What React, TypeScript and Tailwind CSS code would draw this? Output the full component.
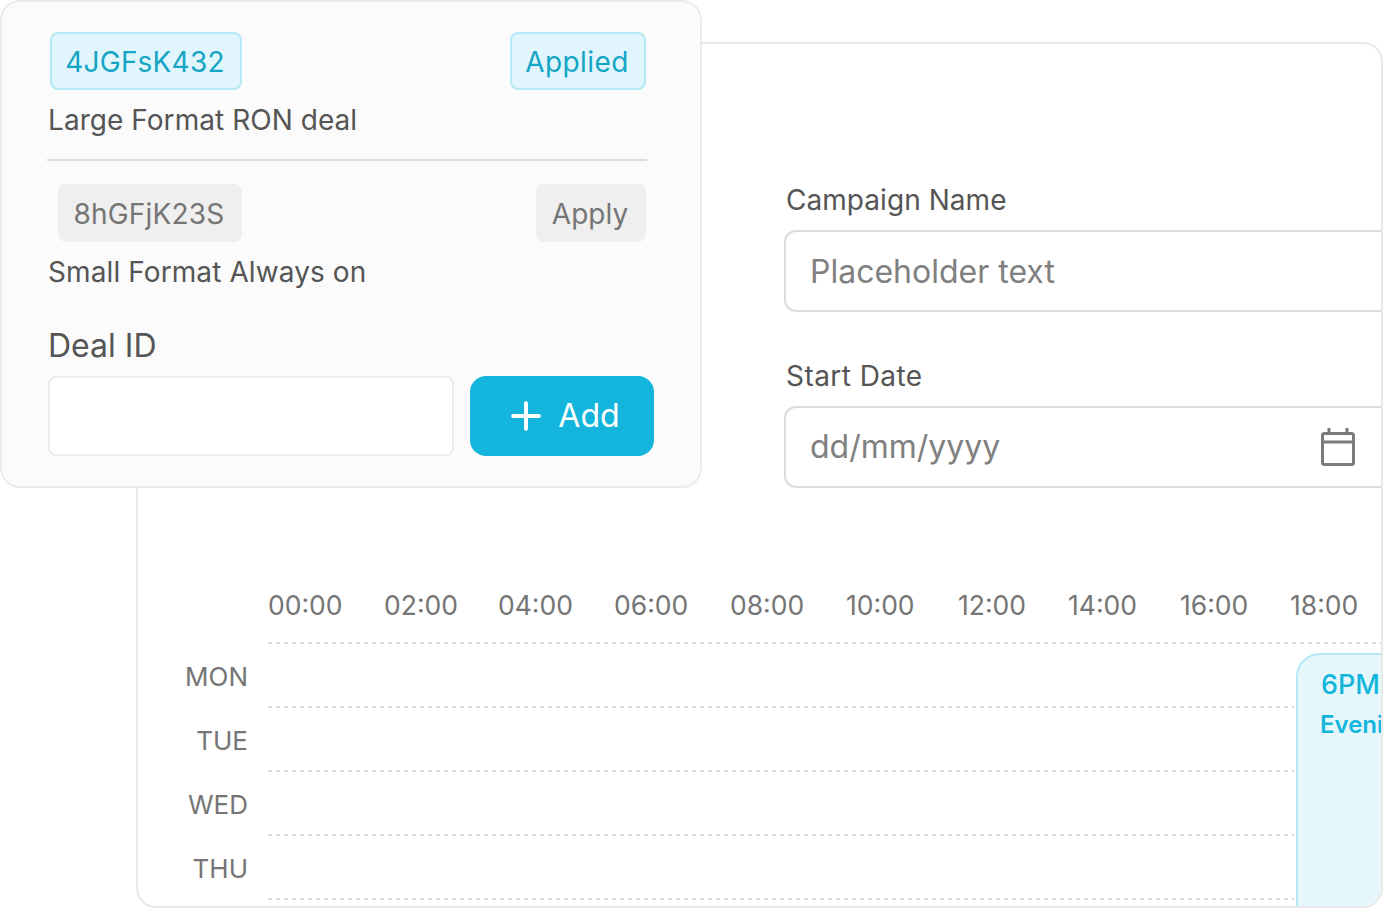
import { Plus } from 'lucide-react';

const hours = ['00:00', '02:00', '04:00', '06:00', '08:00', '10:00', '12:00', '14:00', '16:00', '18:00'];
const days = ['MON', 'TUE', 'WED', 'THU'];

const dashed =
  'h-[2px] bg-[repeating-linear-gradient(to_right,#d9d9d9_0,#d9d9d9_4px,transparent_4px,transparent_8px)]';

const CalendarIcon = () => (
  <svg width="34" height="38" viewBox="0 0 34 38" fill="none" stroke="#7a7a7a" strokeWidth="3">
    <rect x="1.5" y="5.5" width="31" height="31" rx="2" />
    <path d="M1.5 14h31" />
    <path d="M8 0v6M26 0v6" />
  </svg>
);

const DealCard = () => (
  <div className="absolute left-0 top-0 w-[702px] h-[488px] bg-[#fbfbfb] border-2 border-[#ececec] rounded-[20px] pt-[30px] pl-[46px] pr-[46px]">
    <div className="flex items-center justify-between pl-[2px] pr-[8px]">
      <span className="h-[58px] w-[192px] pt-[2px] pr-[2px] flex items-center justify-center rounded-[8px] border-2 border-[#b4e9f5] bg-[#e1f6fc] text-[28px] text-[#14a5c5] tracking-[0.2px]">
        4JGFsK432
      </span>
      <span className="h-[58px] w-[136px] pt-[2px] pr-[2px] flex items-center justify-center rounded-[8px] border-2 border-[#b4e9f5] bg-[#e1f6fc] text-[28px] text-[#14a5c5] tracking-[0.4px]">
        Applied
      </span>
    </div>
    <p className="mt-[11px] text-[28px] leading-[38px] text-[#555555] tracking-[0.05px]">Large Format RON deal</p>
    <div className="mt-[20px] h-[2px] w-[600px] -ml-[1px] bg-[#dcdcdc]" />
    <div className="mt-[23px] flex items-center justify-between pl-[10px] pr-[8px]">
      <span className="h-[58px] w-[184px] pt-[2px] pr-[2px] flex items-center justify-center rounded-[8px] bg-[#efefef] text-[28px] text-[#757575] tracking-[0.2px]">
        8hGFjK23S
      </span>
      <span className="h-[58px] w-[110px] pt-[2px] pr-[2px] flex items-center justify-center rounded-[8px] bg-[#efefef] text-[28px] text-[#757575]">
        Apply
      </span>
    </div>
    <p className="mt-[11px] text-[28px] leading-[38px] text-[#555555] tracking-[0.1px]">Small Format Always on</p>
    <p className="mt-[33px] text-[32px] leading-[44px] text-[#555555]">Deal ID</p>
    <div className="mt-[8px] flex gap-[16px]">
      <div className="h-[80px] w-[406px] rounded-[8px] border-2 border-[#ececec] bg-white" />
      <button className="h-[80px] w-[184px] flex items-center justify-center gap-[10px] rounded-[16px] bg-[#14b5dc] text-[32px] text-white">
        <Plus size={44} strokeWidth={2.2} />
        Add
      </button>
    </div>
  </div>
);

const App = () => {
  return (
    <div
      className="relative w-[1383px] h-[908px] overflow-hidden bg-white pl-[136px] pt-[42px]"
      style={{ fontFamily: 'Inter, "Liberation Sans", sans-serif' }}
    >
      <div className="relative h-[866px] w-[1247px] overflow-hidden rounded-[20px] border-2 border-[#e9e9e9]">
        {/* Form */}
        <div className="ml-[646px] pt-[138px]">
          <label className="block pl-[2px] text-[28px] leading-[36px] text-[#555555] tracking-[0.05px]">
            Campaign Name
          </label>
          <div className="mt-[12px] h-[82px] pt-[1px] flex items-center rounded-l-[12px] border-y-2 border-l-2 border-[#dcdcdc] pl-[24px] text-[32px] text-[#808080]">
            Placeholder text
          </div>
          <label className="mt-[46px] block pl-[2px] text-[28px] leading-[36px] text-[#555555] tracking-[0.45px]">
            Start Date
          </label>
          <div className="mt-[12px] h-[82px] flex items-center justify-between rounded-l-[12px] border-y-2 border-l-2 border-[#dcdcdc] pl-[24px] pr-[26px] text-[32px] text-[#808080]">
            dd/mm/yyyy
            <CalendarIcon />
          </div>
        </div>

        {/* Schedule */}
        <div className="mt-[101px]">
          <div className="ml-[130px] grid grid-cols-[116px_114px_116px_116px_116px_112px_110px_112px_110px_auto] text-[26.5px] leading-[32px] text-[#757575]">
            {hours.map((h) => (
              <span key={h}>{h}</span>
            ))}
          </div>
          <div className={`ml-[130px] mt-[21px] ${dashed}`} />
          {days.map((d) => (
            <div key={d} className="flex h-[64px] items-end">
              <span className="w-[110px] self-start pt-[17px] text-right text-[26px] leading-[32px] text-[#757575]">
                {d}
              </span>
              <div className={`ml-[20px] w-[1026px] ${dashed}`} />
            </div>
          ))}
        </div>

        {/* Event block */}
        <div className="absolute left-[1158px] top-[609px] h-[260px] w-[100px] overflow-hidden rounded-tl-[24px] border-2 border-[#b4e9f5] bg-[#e5f7fb] pl-[22px] pt-[10px] text-[#14b5dc] whitespace-nowrap">
          <p className="pl-[1px] text-[27px] leading-[40px] font-medium">6PM-9PM</p>
          <p className="text-[24px] leading-[40px] font-semibold">Evening</p>
        </div>
      </div>

      <DealCard />
    </div>
  );
};

export default App;
